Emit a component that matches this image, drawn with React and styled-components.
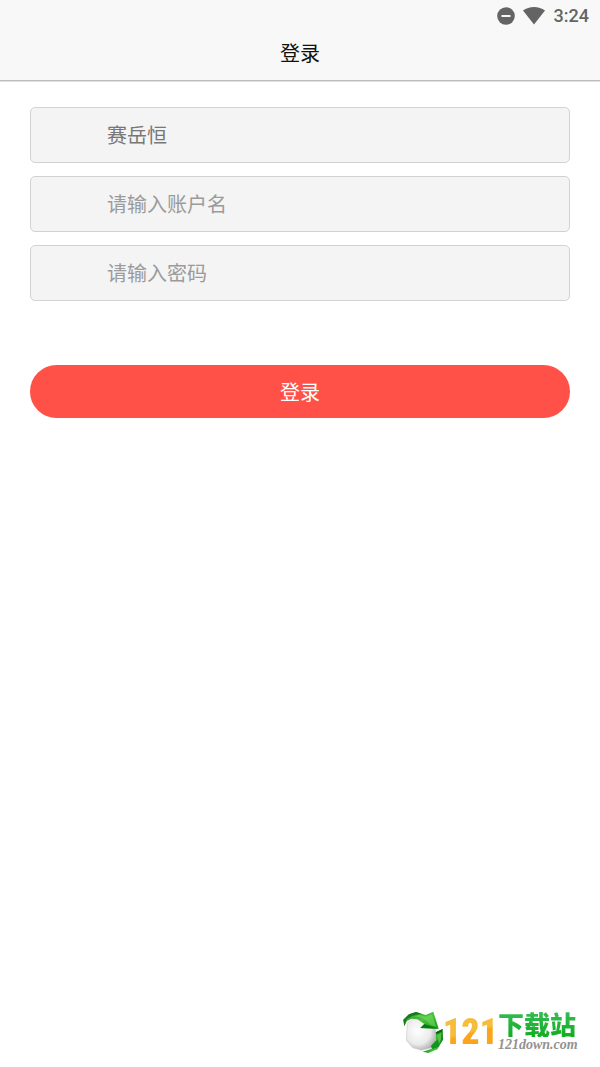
import React, { useState } from "react";
import styled, { createGlobalStyle } from "styled-components";

const GlobalStyle = createGlobalStyle`
  * { box-sizing: border-box; }
  body {
    margin: 0;
    background: #fff;
    font-family: Roboto, "Noto Sans CJK SC", sans-serif;
  }
`;

const Page = styled.div`
  display: flex;
  flex-direction: column;
  min-height: 100vh;
`;

const Header = styled.header`
  background: #f8f8f8;
  border-bottom: 1px solid #bcbcbc;
  box-shadow: 0 1px 0 #e0e0e0;
`;

const StatusBar = styled.div`
  display: flex;
  align-items: center;
  justify-content: flex-end;
  height: 32px;
  padding: 0 11px;
  color: #646464;
`;

const Clock = styled.time`
  margin-left: 9px;
  font-size: 18px;
  font-weight: 500;
  line-height: 32px;
`;

const DndIcon = styled.svg`
  width: 18px;
  height: 18px;
  margin-right: 8px;
`;

const WifiIcon = styled.svg`
  width: 22px;
  height: 20px;
`;

const Title = styled.h1`
  margin: 0;
  padding: 7px 0 11px;
  color: #111;
  font-size: 20px;
  font-weight: 400;
  line-height: 30px;
  text-align: center;
`;

const Form = styled.form`
  display: flex;
  flex-direction: column;
  gap: 13px;
  padding: 26px 30px;
`;

const Field = styled.input`
  width: 100%;
  height: 56px;
  padding: 0 76px 2px;
  border: 1px solid #d2d2d2;
  border-radius: 5px;
  background: #f4f4f4;
  color: #777;
  font-family: "Noto Sans CJK SC", sans-serif;
  font-size: 20px;
  line-height: 30px;
  outline: none;

  &::placeholder {
    color: #9b9b9b;
    opacity: 1;
  }
`;

const SubmitButton = styled.button`
  height: 53px;
  margin-top: 51px;
  border: 0;
  border-radius: 27px;
  background: #ff5147;
  color: #fff;
  font-family: inherit;
  font-size: 20px;
  cursor: pointer;
`;

const Footer = styled.footer`
  display: flex;
  align-items: center;
  justify-content: flex-end;
  margin-top: auto;
  padding: 0 22px 14px;
`;

const BrandMark = styled.svg`
  width: 40px;
  height: 42px;
`;

const BrandNumber = styled.span`
  background: linear-gradient(165deg, #f6bd3c 0 48%, #fba51c 54% 100%);
  background-clip: text;
  color: transparent;
  font-family: "Roboto Condensed", "Liberation Sans", sans-serif;
  font-size: 36px;
  font-weight: 900;
  line-height: 42px;
`;

const BrandText = styled.div`
  display: flex;
  flex-direction: column;
  width: 80px;
`;

const BrandName = styled.span`
  background: linear-gradient(#35bd55, #12ad20);
  background-clip: text;
  color: transparent;
  font-family: "Noto Sans CJK SC", sans-serif;
  font-size: 26px;
  font-weight: 900;
  line-height: 26px;
  white-space: nowrap;
`;

const BrandSite = styled.span`
  color: #929292;
  font-family: "Liberation Serif", serif;
  font-size: 14px;
  font-style: italic;
  font-weight: 700;
  line-height: 16px;
`;

function Logo() {
  return (
    <BrandMark viewBox="10 22 120 126" aria-hidden="true">
      <defs>
        <radialGradient id="ball" cx="40%" cy="38%" r="66%">
          <stop offset="0" stopColor="#fff" />
          <stop offset=".65" stopColor="#ebebeb" />
          <stop offset="1" stopColor="#b0b0b0" />
        </radialGradient>
        <linearGradient id="leaf" x1="0" y1="0" x2="1" y2="1">
          <stop offset="0" stopColor="#2a8a28" />
          <stop offset=".5" stopColor="#4cc440" />
          <stop offset="1" stopColor="#139a17" />
        </linearGradient>
        <linearGradient id="fold" x1="0" y1="0" x2="1" y2="0">
          <stop offset="0" stopColor="#1f9a20" />
          <stop offset=".6" stopColor="#48c640" />
          <stop offset="1" stopColor="#0b7d12" />
        </linearGradient>
      </defs>
      <path d="M23 59L43 45L83 50L108 76V117L94 133L65 140L39 132L20 110Z" fill="url(#ball)" stroke="#d0d0d0" strokeWidth="2" strokeLinejoin="round" />
      <path d="M11 48L28 32L49 25L78 34L101 24L117 75L62 73L74 61L53 47L36 45L22 52L14 68Z" fill="url(#leaf)" />
      <path d="M11 48L28 32L49 25L65 30L38 36L21 47L14 68Z" fill="#147b19" />
      <path d="M34 41C52 34 75 42 92 63L109 69L97 32L79 39L59 33Z" fill="#78dd62" opacity=".55" />
      <path d="M62 73L74 61L117 75Z" fill="#087b12" />
      <path d="M108 86L129 76L130 108L113 137L86 148L69 144L96 135L94 127L108 112Z" fill="url(#fold)" />
      <path d="M108 86L129 76L126 84L111 92Z" fill="#07650d" />
      <path d="M108 112L115 108L119 128L99 137L94 127Z" fill="#149321" />
      <path d="M113 95L125 86L124 107L118 119Z" fill="#72dd5e" opacity=".6" />
    </BrandMark>
  );
}

export default function App() {
  const [school, setSchool] = useState("赛岳恒");

  return (
    <Page>
      <GlobalStyle />
      <Header>
        <StatusBar>
          <DndIcon viewBox="0 0 18 18" aria-hidden="true">
            <circle cx="9" cy="9" r="8.800" fill="currentColor" />
            <rect x="4.500" y="8" width="9" height="2" fill="#f8f8f8" />
          </DndIcon>
          <WifiIcon viewBox="0 0 22 20" aria-hidden="true">
            <path d="M0 4.500C6-.3 16-.3 22 4.500L11 18.500Z" fill="currentColor" />
          </WifiIcon>
          <Clock>3:24</Clock>
        </StatusBar>
        <Title>登录</Title>
      </Header>
      <Form onSubmit={(event) => event.preventDefault()}>
        <Field
          aria-label="名称"
          value={school}
          onChange={(event) => setSchool(event.target.value)}
        />
        <Field aria-label="账户名" placeholder="请输入账户名" autoComplete="username" />
        <Field
          aria-label="密码"
          type="password"
          placeholder="请输入密码"
          autoComplete="current-password"
        />
        <SubmitButton type="submit">登录</SubmitButton>
      </Form>
      <Footer>
        <Logo />
        <BrandNumber>121</BrandNumber>
        <BrandText>
          <BrandName>下载站</BrandName>
          <BrandSite>121down.com</BrandSite>
        </BrandText>
      </Footer>
    </Page>
  );
}
